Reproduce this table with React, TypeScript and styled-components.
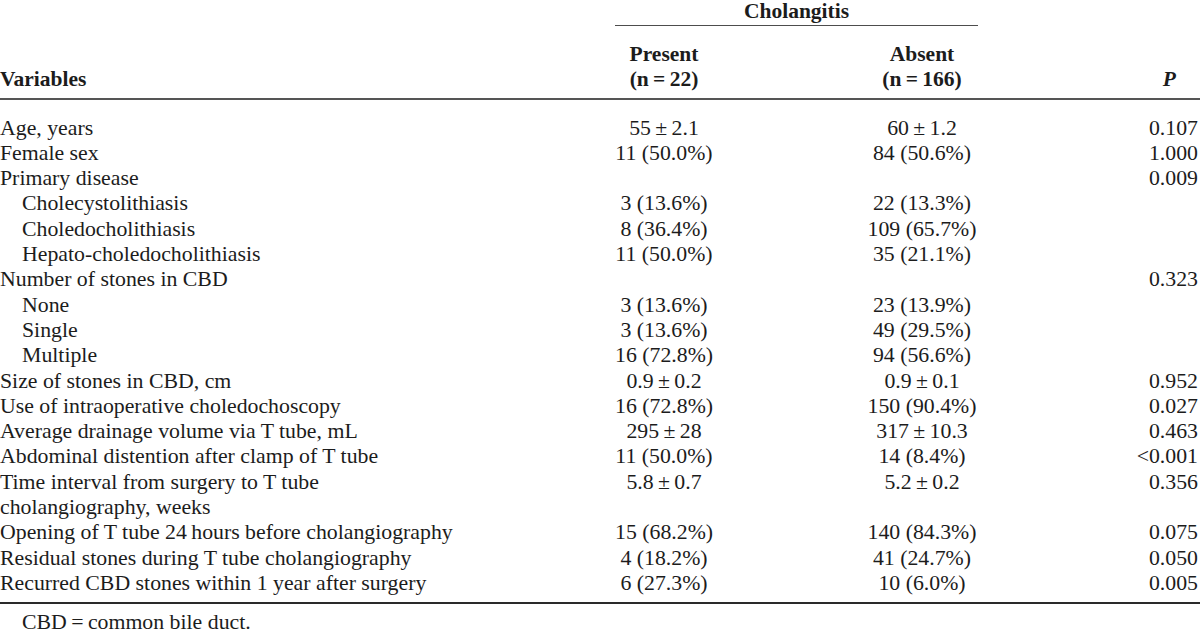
import { FC } from 'react'
import styled, { createGlobalStyle } from 'styled-components'

interface TableRow {
  label: string
  present?: string
  absent?: string
  p?: string
  indent?: boolean
}

const T = '\u2009'

const rows: TableRow[] = [
  { label: 'Age, years', present: `55${T}±${T}2.1`, absent: `60${T}±${T}1.2`, p: '0.107' },
  { label: 'Female sex', present: '11 (50.0%)', absent: '84 (50.6%)', p: '1.000' },
  { label: 'Primary disease', p: '0.009' },
  { label: 'Cholecystolithiasis', present: '3 (13.6%)', absent: '22 (13.3%)', indent: true },
  { label: 'Choledocholithiasis', present: '8 (36.4%)', absent: '109 (65.7%)', indent: true },
  { label: 'Hepato-choledocholithiasis', present: '11 (50.0%)', absent: '35 (21.1%)', indent: true },
  { label: 'Number of stones in CBD', p: '0.323' },
  { label: 'None', present: '3 (13.6%)', absent: '23 (13.9%)', indent: true },
  { label: 'Single', present: '3 (13.6%)', absent: '49 (29.5%)', indent: true },
  { label: 'Multiple', present: '16 (72.8%)', absent: '94 (56.6%)', indent: true },
  { label: 'Size of stones in CBD, cm', present: `0.9${T}±${T}0.2`, absent: `0.9${T}±${T}0.1`, p: '0.952' },
  { label: 'Use of intraoperative choledochoscopy', present: '16 (72.8%)', absent: '150 (90.4%)', p: '0.027' },
  { label: 'Average drainage volume via T tube, mL', present: `295${T}±${T}28`, absent: `317${T}±${T}10.3`, p: '0.463' },
  { label: 'Abdominal distention after clamp of T tube', present: '11 (50.0%)', absent: '14 (8.4%)', p: `<0.001` },
  {
    label: 'Time interval from surgery to T tube\ncholangiography, weeks',
    present: `5.8${T}±${T}0.7`,
    absent: `5.2${T}±${T}0.2`,
    p: '0.356',
  },
  { label: `Opening of T tube 24${T}hours before cholangiography`, present: '15 (68.2%)', absent: '140 (84.3%)', p: '0.075' },
  { label: 'Residual stones during T tube cholangiography', present: '4 (18.2%)', absent: '41 (24.7%)', p: '0.050' },
  { label: 'Recurred CBD stones within 1 year after surgery', present: '6 (27.3%)', absent: '10 (6.0%)', p: '0.005' },
]

const App: FC = () => (
  <>
    <GlobalStyle />
    <Table>
      <GroupRow>
        <GroupTitle>Cholangitis</GroupTitle>
      </GroupRow>
      <HeadRow>
        <HeadLabel>Variables</HeadLabel>
        <HeadCell>
          Present
          <br />
          (n{T}={T}22)
        </HeadCell>
        <Spacer />
        <HeadCell>
          Absent
          <br />
          (n{T}={T}166)
        </HeadCell>
        <PHead>P</PHead>
      </HeadRow>
      <Body>
        {rows.map((row) => (
          <Row key={row.label}>
            <Label $indent={row.indent}>{row.label}</Label>
            <Value>{row.present}</Value>
            <Spacer />
            <Value>{row.absent}</Value>
            <PValue>{row.p}</PValue>
          </Row>
        ))}
      </Body>
      <Footnote>CBD{T}={T}common bile duct.</Footnote>
    </Table>
  </>
)

export default App

const GlobalStyle = createGlobalStyle`
  html, body {
    margin: 0;
    padding: 0;
    background: #fff;
  }
  body {
    font-family: "Liberation Serif", "Times New Roman", serif;
    color: #1c1c1c;
    width: 1200px;
    height: 633px;
    overflow: hidden;
  }
`

// variables | present | gap | absent | P
const COLUMNS = '615px 98px 153px 112px 1fr'

const Table = styled.div`
  width: 1200px;
  font-size: 21.8px;
  line-height: 25.3px;
`

const GroupRow = styled.div`
  display: grid;
  grid-template-columns: ${COLUMNS};
  height: 26px;
`

const GroupTitle = styled.div`
  grid-column: 2 / 5;
  font-size: 21.5px;
  font-weight: bold;
  text-align: center;
  line-height: 22px;
  border-bottom: 1px solid #4d4d4d;
`

const HeadRow = styled.div`
  display: grid;
  grid-template-columns: ${COLUMNS};
  align-items: end;
  padding: 16px 0 5px;
  border-bottom: 2px solid #555;
  font-size: 21.5px;
  font-weight: bold;
`

const HeadLabel = styled.div`
  text-align: left;
`

const HeadCell = styled.div`
  text-align: center;
  white-space: nowrap;
`

const Spacer = styled.div``

const PHead = styled.div`
  text-align: right;
  font-style: italic;
  padding-right: 24px;
`

const Body = styled.div`
  padding: 16px 0 6px;
  border-bottom: 2px solid #2a2a2a;
`

const Row = styled.div`
  display: grid;
  grid-template-columns: ${COLUMNS};
`

const Label = styled.div<{ $indent?: boolean }>`
  white-space: pre-line;
  padding-left: ${({ $indent }) => ($indent ? '22px' : '0')};
`

const Value = styled.div`
  text-align: center;
  white-space: nowrap;
`

const PValue = styled.div`
  text-align: right;
  padding-right: 2px;
`

const Footnote = styled.div`
  padding: 9px 0 0 22px;
  line-height: 18px;
`
